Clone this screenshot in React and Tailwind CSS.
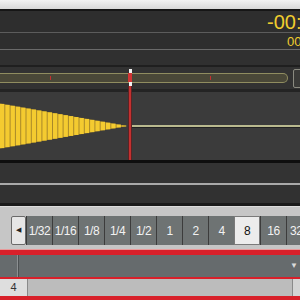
import React from "react";

function Waveform() {
  const bars = [];
  const pitch = 5.3;
  for (let i = 0; i * pitch < 127; i++) {
    const x0 = i * pitch;
    const x1 = Math.min(x0 + pitch - 1, 127);
    const hAt = (x) => 22.5 * (1 - x / 127);
    const h = hAt((x0 + x1) / 2);
    bars.push(
      <rect key={i} x={x0} y={34 - h} width={x1 - x0} height={h * 2} fill="#f4cb30" />
    );
  }
  return (
    <svg width="300" height="68" viewBox="0 0 300 68" className="block">
      <polygon points="0,11.5 127,34 0,56.5" fill="#a8882a" />
      {bars}
      <rect x="130" y="33" width="170" height="2" fill="#b9b98e" />
      <rect x="130" y="35" width="170" height="1" fill="#222" />
    </svg>
  );
}

const divs = ["1/32", "1/16", "1/8", "1/4", "1/2", "1", "2", "4", "8", "16"];

export default function App() {
  return (
    <div
      className="relative w-[300px] h-[300px] overflow-hidden flex flex-col bg-[#2e2e2e]"
      style={{ fontFamily: '"Liberation Sans", Arial, sans-serif' }}
    >
      <div className="h-[9px] bg-gradient-to-b from-[#f2f2f2] to-[#d8d8d8]" />
      <div className="h-[2px] bg-[#161616]" />
      <div className="h-[21px] flex items-center justify-start pl-[267px] text-[#f0cd2e] text-[20px] leading-none whitespace-nowrap">
        -00:
      </div>
      <div className="h-px bg-[#5c5c5c]" />
      <div className="h-[16px] flex items-center pl-[287px] text-[#f0cd2e] text-[13px] leading-none">
        00
      </div>
      <div className="h-px bg-[#6a6a6a]" />
      <div className="h-[15px] bg-[#303030]" />
      <div className="h-[2px] bg-[#1f1f1f]" />
      <div className="h-[22px] bg-[#323232] flex items-center gap-[5px]">
        <div className="relative shrink-0 w-[288px] h-[10px] bg-[#4a4838] border-y border-r border-[#908d60] rounded-r-[5px]">
          <div className="absolute left-[50px] top-[2px] w-px h-[4px] bg-[#c23030]" />
          <div className="absolute left-[210px] top-[2px] w-px h-[4px] bg-[#c23030]" />
        </div>
        <div className="shrink-0 w-[12px] h-[19px] bg-[#3a3a38] border border-[#8a8a80] rounded-[2px]" />
      </div>
      <div className="h-[3px] bg-[#242424]" />
      <div className="h-[68px] bg-[#3b3b3b]">
        <Waveform />
      </div>
      <div className="h-[3px] bg-[#0e0e0e]" />
      <div className="h-[20px] bg-[#333333]" />
      <div className="h-[2px] bg-[#a9a9a9]" />
      <div className="h-[18px] bg-[#313131]" />
      <div className="h-[3px] bg-[#1a1a1a]" />
      <div className="h-px bg-[#dcdcdc]" />
      <div className="h-[42px] bg-[#c6c6c6] pt-[9px] pl-[11px] flex items-start">
        <div className="shrink-0 w-[15px] h-[29px] bg-[#e6e6e6] border border-[#6a6a6a] rounded-[2px] flex items-center justify-center text-[#222] text-[7px]">
          ◀
        </div>
        {divs.map((d) => (
          <div
            key={d}
            className={
              d === "8"
                ? "w-[26px] shrink-0 h-[29px] bg-[#ececec] border border-[#7a7a7a] flex items-center justify-center text-[#111] text-[12px] tracking-[-0.5px]"
                : "w-[26px] shrink-0 h-[29px] bg-[#6e7373] border-l border-[#3c3c3c] flex items-center justify-center text-[#f2f2f2] text-[12px] tracking-[-0.5px]"
            }
          >
            {d}
          </div>
        ))}
        <div className="w-[26px] shrink-0 h-[29px] bg-[#6e7373] border-l border-[#3c3c3c] flex items-center pl-[3px] text-[#f2f2f2] text-[12px] tracking-[-0.5px]">
          32
        </div>
      </div>
      <div className="h-px bg-[#e89a9a]" />
      <div className="h-[5px] bg-[#d8202a]" />
      <div className="h-[22px] bg-[#666b6d] flex items-center">
        <div className="w-[17px] h-full" />
        <div className="w-px h-full bg-[#8c9092]" />
        <div className="w-px h-full bg-[#4c5052]" />
        <div className="flex-1" />
        <div className="pr-[2px] text-[#dadada] text-[8px] leading-none">▼</div>
      </div>
      <div className="h-[2px] bg-[#d8202a]" />
      <div className="h-[17px] bg-[#bcbcbc] flex">
        <div className="w-[28px] h-full bg-[#dedede] border-r border-[#8a8a8a] flex items-center justify-center text-[#333] text-[11px]">
          4
        </div>
        <div className="flex-1" />
        <div className="w-[8px] h-full bg-[#d4d4d4] border-l border-[#8a8a8a]" />
      </div>
      <div className="h-[4px] bg-[#d8202a]" />

      {/* playhead overlay */}
      <div className="absolute left-[128px] top-[69px] w-[4px] h-[91px] flex flex-col items-center">
        <div className="w-[3px] h-[4px] bg-[#f2f2f2]" />
        <div className="w-[4px] h-[9px] bg-[#d23434]" />
        <div className="w-[3px] h-[4px] bg-[#f2f2f2]" />
        <div className="w-[4px] flex-1 bg-[#5a2424] flex justify-center">
          <div className="w-[2px] h-full bg-[#c43030]" />
        </div>
      </div>
    </div>
  );
}
